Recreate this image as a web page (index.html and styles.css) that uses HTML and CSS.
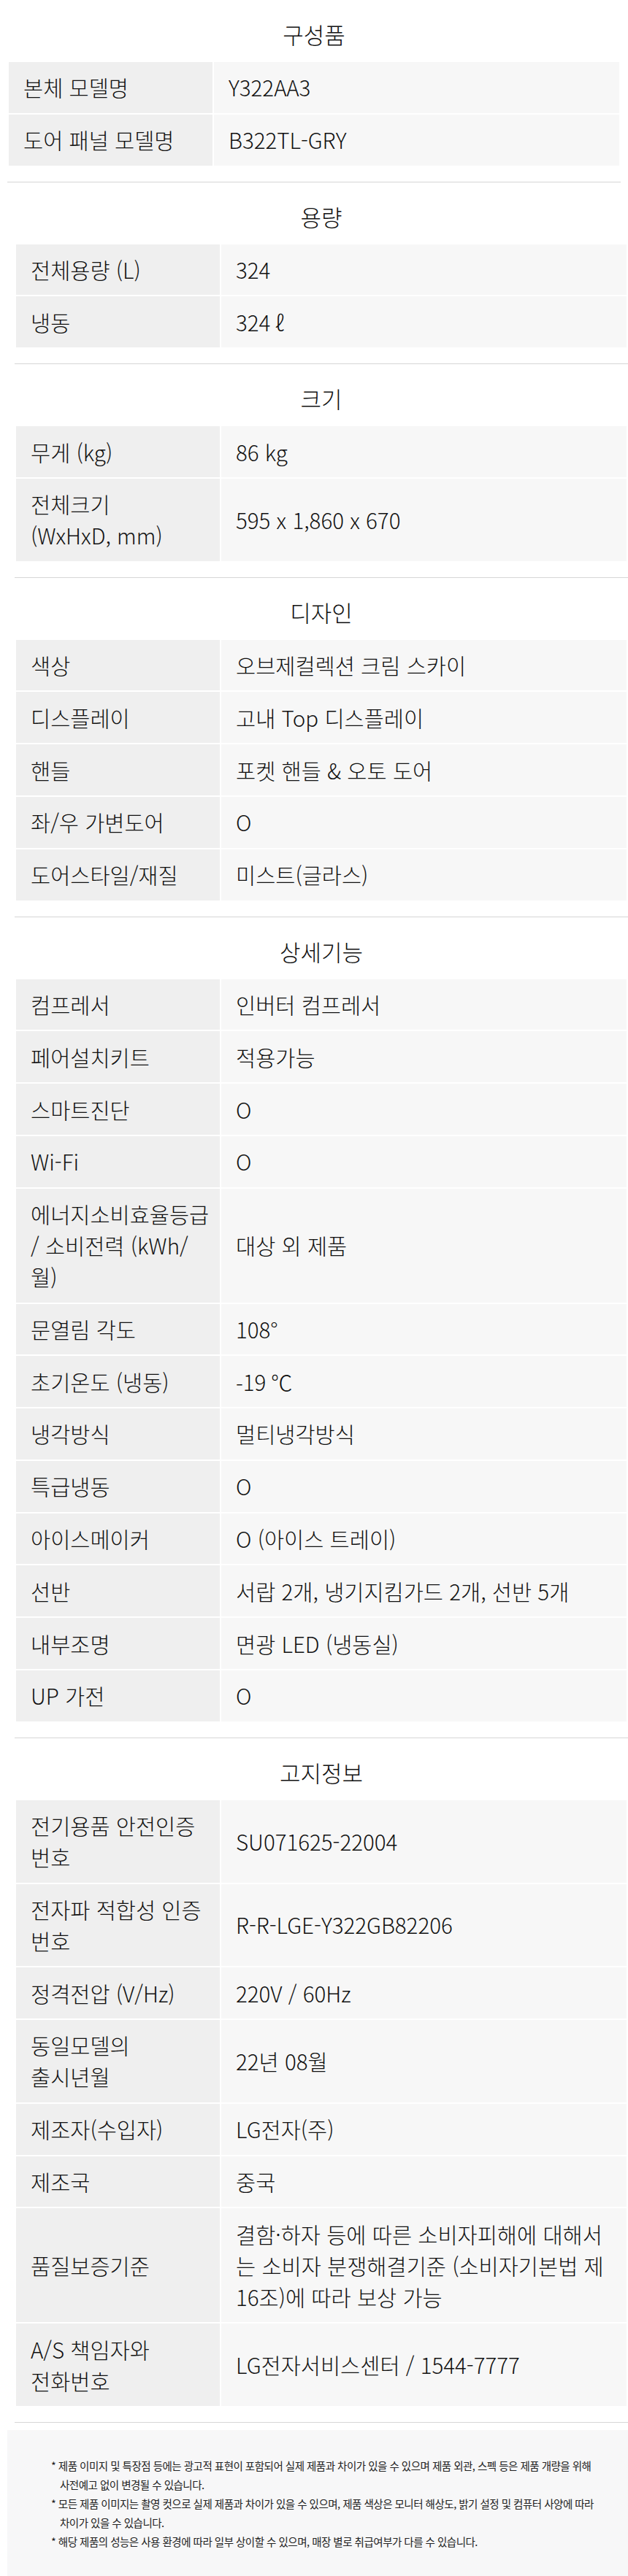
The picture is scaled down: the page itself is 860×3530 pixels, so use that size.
FILE: index.html
```html
<!DOCTYPE html>
<html lang="ko">
<head>
<meta charset="utf-8">
<title>제품 사양</title>
<link rel="stylesheet" href="styles.css">
</head>
<body>
<div class="spec">
  <section class="spec-group spec-group--first">
    <h3 class="spec-title">구성품</h3>
    <table class="spec-table">
      <colgroup><col class="col-label"><col></colgroup>
      <tr><th>본체 모델명</th><td>Y322AA3</td></tr>
      <tr><th>도어 패널 모델명</th><td>B322TL-GRY</td></tr>
    </table>
  </section>

  <section class="spec-group">
    <h3 class="spec-title">용량</h3>
    <table class="spec-table">
      <colgroup><col class="col-label"><col></colgroup>
      <tr><th>전체용량 (L)</th><td>324</td></tr>
      <tr><th>냉동</th><td>324 ℓ</td></tr>
    </table>
  </section>

  <section class="spec-group">
    <h3 class="spec-title">크기</h3>
    <table class="spec-table">
      <colgroup><col class="col-label"><col></colgroup>
      <tr><th>무게 (kg)</th><td>86 kg</td></tr>
      <tr><th>전체크기<br>(WxHxD, mm)</th><td>595 x 1,860 x 670</td></tr>
    </table>
  </section>

  <section class="spec-group">
    <h3 class="spec-title">디자인</h3>
    <table class="spec-table">
      <colgroup><col class="col-label"><col></colgroup>
      <tr><th>색상</th><td>오브제컬렉션 크림 스카이</td></tr>
      <tr><th>디스플레이</th><td>고내 Top 디스플레이</td></tr>
      <tr><th>핸들</th><td>포켓 핸들 &amp; 오토 도어</td></tr>
      <tr><th>좌/우 가변도어</th><td>O</td></tr>
      <tr><th>도어스타일/재질</th><td>미스트(글라스)</td></tr>
    </table>
  </section>

  <section class="spec-group">
    <h3 class="spec-title">상세기능</h3>
    <table class="spec-table">
      <colgroup><col class="col-label"><col></colgroup>
      <tr><th>컴프레서</th><td>인버터 컴프레서</td></tr>
      <tr><th>페어설치키트</th><td>적용가능</td></tr>
      <tr><th>스마트진단</th><td>O</td></tr>
      <tr><th>Wi-Fi</th><td>O</td></tr>
      <tr><th>에너지소비효율등급<br>/ 소비전력 (kWh/<br>월)</th><td>대상 외 제품</td></tr>
      <tr><th>문열림 각도</th><td>108°</td></tr>
      <tr><th>초기온도 (냉동)</th><td>-19 ℃</td></tr>
      <tr><th>냉각방식</th><td>멀티냉각방식</td></tr>
      <tr><th>특급냉동</th><td>O</td></tr>
      <tr><th>아이스메이커</th><td>O (아이스 트레이)</td></tr>
      <tr><th>선반</th><td>서랍 2개, 냉기지킴가드 2개, 선반 5개</td></tr>
      <tr><th>내부조명</th><td>면광 LED (냉동실)</td></tr>
      <tr><th>UP 가전</th><td>O</td></tr>
    </table>
  </section>

  <section class="spec-group">
    <h3 class="spec-title">고지정보</h3>
    <table class="spec-table">
      <colgroup><col class="col-label"><col></colgroup>
      <tr><th>전기용품 안전인증 번호</th><td>SU071625-22004</td></tr>
      <tr><th>전자파 적합성 인증 번호</th><td>R-R-LGE-Y322GB82206</td></tr>
      <tr><th>정격전압 (V/Hz)</th><td>220V / 60Hz</td></tr>
      <tr><th>동일모델의 출시년월</th><td>22년 08월</td></tr>
      <tr><th>제조자(수입자)</th><td>LG전자(주)</td></tr>
      <tr><th>제조국</th><td>중국</td></tr>
      <tr><th>품질보증기준</th><td class="wrap-text">결함·하자 등에 따른 소비자피해에 대해서는 소비자 분쟁해결기준 (소비자기본법 제16조)에 따라 보상 가능</td></tr>
      <tr><th>A/S 책임자와 전화번호</th><td>LG전자서비스센터 / 1544-7777</td></tr>
    </table>
  </section>

  <div class="notice">
    <ul class="notice-list">
      <li class="notice-item">* 제품 이미지 및 특장점 등에는 광고적 표현이 포함되어 실제 제품과 차이가 있을 수 있으며 제품 외관, 스펙 등은 제품 개량을 위해 사전예고 없이 변경될 수 있습니다.</li>
      <li class="notice-item">* 모든 제품 이미지는 촬영 컷으로 실제 제품과 차이가 있을 수 있으며, 제품 색상은 모니터 해상도, 밝기 설정 및 컴퓨터 사양에 따라 차이가 있을 수 있습니다.</li>
      <li class="notice-item">* 해당 제품의 성능은 사용 환경에 따라 일부 상이할 수 있으며, 매장 별로 취급여부가 다를 수 있습니다.</li>
    </ul>
  </div>
</div>
</body>
</html>
```

FILE: styles.css
```css
html, body {
  margin: 0;
  padding: 0;
  background: #ffffff;
}

body {
  font-family: "Noto Sans CJK KR", "Noto Sans", sans-serif;
  color: #111111;
}

.spec {
  width: 860px;
  overflow: hidden;
}

.spec-group {
  width: 840px;
  margin-left: 20px;
  padding-bottom: 20px;
  border-bottom: 1px solid #d6d6d6;
}

.spec-group--first {
  margin-left: 10px;
}

.spec-title {
  margin: 0;
  padding: 25px 0 14px;
  font-size: 31px;
  line-height: 44px;
  font-weight: 300;
  text-align: center;
  color: #111111;
}

.spec-table {
  width: 100%;
  table-layout: fixed;
  border-collapse: separate;
  border-spacing: 2px;
}

.col-label {
  width: 279px;
}

.spec-table th,
.spec-table td {
  font-size: 29.5px;
  line-height: 43px;
  font-weight: 300;
  text-align: left;
  vertical-align: middle;
  color: #111111;
}

.spec-table th {
  padding: 13.4px 10px 13.4px 20px;
  background: #efefef;
  word-break: keep-all;
}

.spec-table td {
  padding: 13.4px 20px;
  background: #f7f7f7;
}

.spec-table td.wrap-text {
  padding-right: 28px;
}

.notice {
  width: 850px;
  box-sizing: border-box;
  margin: 10px 0 0 10px;
  padding: 36px 40px 34px 60px;
  background: #f7f7f8;
}

.notice-list {
  list-style: none;
  margin: 0;
  padding: 0;
  word-break: keep-all;
  color: #222222;
}

.notice-item {
  display: block;
  padding-left: 12px;
  text-indent: -12px;
  font-size: 14.5px;
  line-height: 26px;
  letter-spacing: -0.5px;
}
```
